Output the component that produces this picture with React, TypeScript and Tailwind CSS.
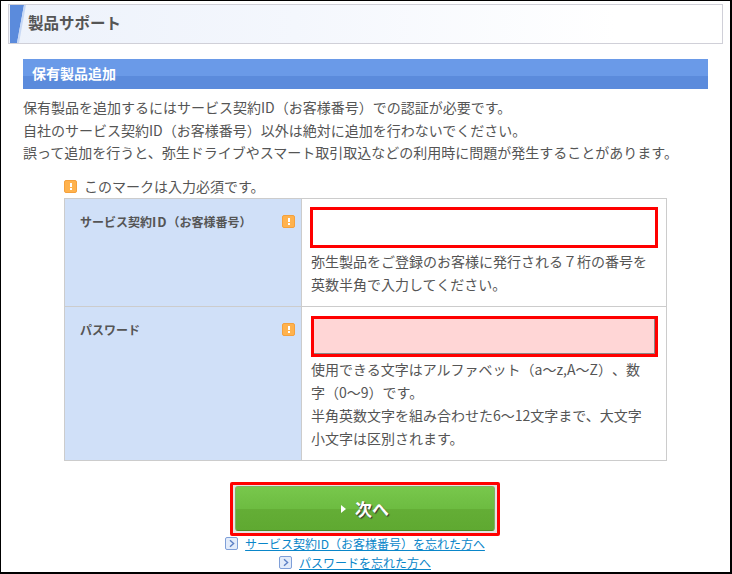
const font = "font-['Noto_Sans_CJK_JP','Noto_Sans',sans-serif]";

const Required = ({ className = "" }: { className?: string }) => (
  <span className={`flex h-[13px] w-[13px] shrink-0 items-center justify-center rounded-[2px] border border-[#f5a13c] bg-[#ffb24d] ${className}`}>
    <span className="h-[7px] w-[2px] border-b-2 border-b-white bg-[linear-gradient(#fff_0,#fff_4px,#ffb24d_4px)]" />
  </span>
);

const LinkIcon = () => (
  <svg width="13" height="13" viewBox="0 0 13 13" className="shrink-0">
    <rect x="0.5" y="0.5" width="12" height="12" rx="1.5" fill="#e3ecfa" stroke="#7f9fd8" />
    <path d="M5 3.2 L8.6 6.5 L5 9.8" fill="none" stroke="#5b7fc4" strokeWidth="1.4" />
  </svg>
);

const HelpLink = ({ text }: { text: string }) => (
  <div className="flex h-[19px] items-center justify-center gap-[7px]">
    <LinkIcon />
    <a className="text-[12px] leading-[19px] text-[#0a86c9] underline">{text}</a>
  </div>
);

export default function App() {
  return (
    <div className={`${font} h-[574px] w-[732px] overflow-hidden border-t border-r-2 border-b-2 border-l border-black bg-white text-[#555] [text-spacing-trim:space-all]`}>
      <div className="mx-[7px] mt-[3px] flex h-[40px] w-[715px] items-center overflow-hidden border border-[#d0d0d8] bg-[linear-gradient(90deg,#edf2fb_0%,#f4f7fd_40%,#ffffff_85%)]">
        <svg width="16" height="38" viewBox="0 0 16 38" className="ml-[1px] shrink-0">
          <path d="M0 0 H14 L7 38 H0 Z" fill="#5b8bdc" />
          <path d="M14 0 H16 L9 38 H7 Z" fill="#c7d8f5" />
        </svg>
        <h1 className="ml-[2px] -translate-y-[1px] text-[15.5px] font-bold text-[#555]">製品サポート</h1>
      </div>

      <div className="mx-[22px] mt-[15px] h-[30px] w-[685px] bg-[linear-gradient(#6a9ae8_0,#6a9ae8_17px,#5b8bdc_17px)] pl-[9px] text-[14px] leading-[29px] font-bold text-white">
        保有製品追加
      </div>

      <div className="mt-[7px] ml-[22px] text-[14px] leading-[22.5px] whitespace-nowrap">
        <p>保有製品を追加するにはサービス契約ID（お客様番号）での認証が必要です。</p>
        <p>自社のサービス契約ID（お客様番号）以外は絶対に追加を行わないでください。</p>
        <p>誤って追加を行うと、弥生ドライブやスマート取引取込などの利用時に問題が発生することがあります。</p>
      </div>

      <div className="mt-[14px] ml-[63px] flex h-[18px] items-center gap-[7px] text-[14px]">
        <Required />
        <span>このマークは入力必須です。</span>
      </div>

      <div className="mt-[2px] ml-[63px] w-[603px] border border-[#ccc]">
        <div className="flex h-[108px] border-b border-[#ccc]">
          <div className="flex w-[237px] items-start justify-between border-r border-[#ccc] bg-[#d0e0f8] pt-[14px] pr-[6px] pl-[15px]">
            <span className="text-[12px] leading-[18px] font-bold">
              サービス契約<span className="text-[13px] tracking-[1px]">ID</span>（お客様番号）
            </span>
            <Required className="mt-[2px]" />
          </div>
          <div className="flex-1 pt-[8px] pl-[8px]">
            <div className="h-[41px] w-[348px] border-[3px] border-[#f00] bg-white" />
            <p className="mt-[2px] pl-[1px] text-[14px] leading-[23px] whitespace-nowrap">
              弥生製品をご登録のお客様に発行される７桁の番号を
              <br />
              英数半角で入力してください。
            </p>
          </div>
        </div>
        <div className="flex h-[153px]">
          <div className="flex w-[237px] items-start justify-between border-r border-[#ccc] bg-[#d0e0f8] pt-[14px] pr-[6px] pl-[15px]">
            <span className="text-[12px] leading-[18px] font-bold">パスワード</span>
            <Required className="mt-[2px]" />
          </div>
          <div className="flex-1 pt-[9px] pl-[9px]">
            <div className="h-[41px] w-[347px] border-[3px] border-[#f00] bg-[#ffd6d6] shadow-[inset_-1px_-1px_0_#888]" />
            <p className="mt-[1px] text-[14px] leading-[23px] whitespace-nowrap">
              使用できる文字はアルファベット（a～z,A～Z）、数
              <br />
              字（0～9）です。
              <br />
              半角英数文字を組み合わせた6～12文字まで、大文字
              <br />
              小文字は区別されます。
            </p>
          </div>
        </div>
      </div>

      <div className="mt-[21px] flex justify-center pr-[1px]">
        <div className="h-[54px] w-[270px] rounded-[2px] border-[3px] border-[#f00] bg-[#e4e4e4] px-[2px] pt-[1px] pb-[2px]">
          <button className="flex h-[45px] w-[260px] items-center justify-center gap-[9px] rounded-[3px] border border-[#7fb266] border-b-[#4c8a24] bg-[linear-gradient(#78c74c_0,#6dbc41_50%,#64ae36_50%,#5fa931_100%)] pt-[1px] text-[17px] font-bold text-white [text-shadow:1px_1px_1px_#333]">
            <span className="h-0 w-0 border-y-[4px] border-l-[5px] border-y-transparent border-l-white" />
            次へ
          </button>
        </div>
      </div>

      <div className="mt-[-2px] pr-[21px]">
        <HelpLink text="サービス契約ID（お客様番号）を忘れた方へ" />
        <HelpLink text="パスワードを忘れた方へ" />
      </div>
    </div>
  );
}
